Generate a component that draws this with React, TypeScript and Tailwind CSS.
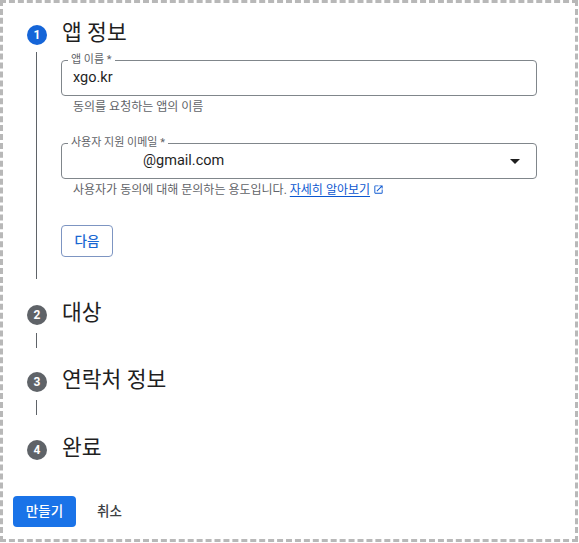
import React from 'react';

const font = { fontFamily: 'Roboto, "Noto Sans CJK KR", sans-serif' };

const StepCircle: React.FC<{ n: number; active?: boolean }> = ({ n, active }) => (
  <div
    className={`mt-[8px] flex h-5 w-5 shrink-0 items-center justify-center rounded-full text-[12px] font-bold leading-none text-white ${
      active ? 'bg-[#1565d8]' : 'bg-[#5f6368]'
    }`}
  >
    {n}
  </div>
);

const StepHeader: React.FC<{ n: number; title: string; active?: boolean; className?: string }> = ({
  n,
  title,
  active,
  className = '',
}) => (
  <div className={`flex items-start ${className}`}>
    <StepCircle n={n} active={active} />
    <span className="ml-[15px] pt-[2px] text-[21.5px] leading-[28px] text-[#1f1f1f]">{title}</span>
  </div>
);

const Connector: React.FC = () => (
  <div className="mt-[6px] pl-[9px]">
    <div className="h-[15px] w-px bg-[#5f6368]" />
  </div>
);

const OpenInNew: React.FC = () => (
  <svg viewBox="0 0 24 24" className="ml-[3px] inline-block h-[11px] w-[11px] fill-[#0b57d0] align-[-1px]">
    <path d="M19 19H5V5h7V3H5c-1.11 0-2 .9-2 2v14c0 1.1.89 2 2 2h14c1.1 0 2-.9 2-2v-7h-2v7zM14 3v2h3.59l-9.83 9.83 1.41 1.41L19 6.41V10h2V3h-7z" />
  </svg>
);

const App: React.FC = () => {
  return (
    <div style={font} className="h-[542px] w-[578px] border-[3px] border-dashed border-[#b8b8b8] bg-white">
      <div className="pl-[24px] pt-[14px]">
        {/* Step 1 */}
        <StepHeader n={1} title="앱 정보" active />
        <div className="mt-[5px] flex">
          <div className="w-[20px] shrink-0 pl-[9px]">
            <div className="h-full w-px bg-[#5f6368]" />
          </div>
          <div className="ml-[14px] pb-[22px] pt-[8px]">
            <div className="relative flex h-9 w-[476px] items-center rounded-[4px] border border-[#80868b] px-[11px]">
              <span className="absolute left-[6px] top-[-8px] bg-white px-[3px] text-[11px] leading-[14px] text-[#5f6368]">
                앱 이름 *
              </span>
              <span className="text-[14.5px] text-[#1f1f1f]">xgo.kr</span>
            </div>
            <p className="mt-[4px] pl-[12px] text-[12px] leading-[14px] text-[#5f6368]">동의를 요청하는 앱의 이름</p>

            <div className="relative mt-[29px] flex h-9 w-[476px] items-center justify-between rounded-[4px] border border-[#80868b] pl-[11px] pr-[16px]">
              <span className="absolute left-[6px] top-[-8px] bg-white px-[3px] text-[11px] leading-[14px] text-[#5f6368]">
                사용자 지원 이메일 *
              </span>
              <span className="flex items-center text-[14.5px] text-[#1f1f1f]">
                <span className="inline-block w-[70px]" />
                @gmail.com
              </span>
              <svg viewBox="0 0 10 5" className="h-[5px] w-[10px] fill-[#1f1f1f]">
                <path d="M0 0h10L5 5z" />
              </svg>
            </div>
            <p className="mt-[4px] pl-[12px] text-[12px] leading-[14px] text-[#5f6368]">
              사용자가 동의에 대해 문의하는 용도입니다.{' '}
              <span className="text-[#0b57d0] underline underline-offset-[2px]">자세히 알아보기</span>
              <OpenInNew />
            </p>

            <button className="mt-[28px] flex h-8 w-[52px] items-center justify-center rounded-[4px] border border-[#7d95c2] text-[13.5px] font-medium text-[#1967d2]">
              다음
            </button>
          </div>
        </div>

        {/* Step 2 */}
        <StepHeader n={2} title="대상" className="mt-[18px]" />
        <Connector />

        {/* Step 3 */}
        <StepHeader n={3} title="연락처 정보" className="mt-[16px]" />
        <Connector />

        {/* Step 4 */}
        <StepHeader n={4} title="완료" className="mt-[17px]" />
      </div>

      <div className="mt-[34px] flex items-center pl-[10px]">
        <button className="flex h-[31px] w-[63px] items-center justify-center rounded-[4px] bg-[#1a73e8] text-[13.5px] font-medium text-white">
          만들기
        </button>
        <button className="ml-[21px] text-[13.5px] font-medium text-[#3c4043]">취소</button>
      </div>
    </div>
  );
};

export default App;
